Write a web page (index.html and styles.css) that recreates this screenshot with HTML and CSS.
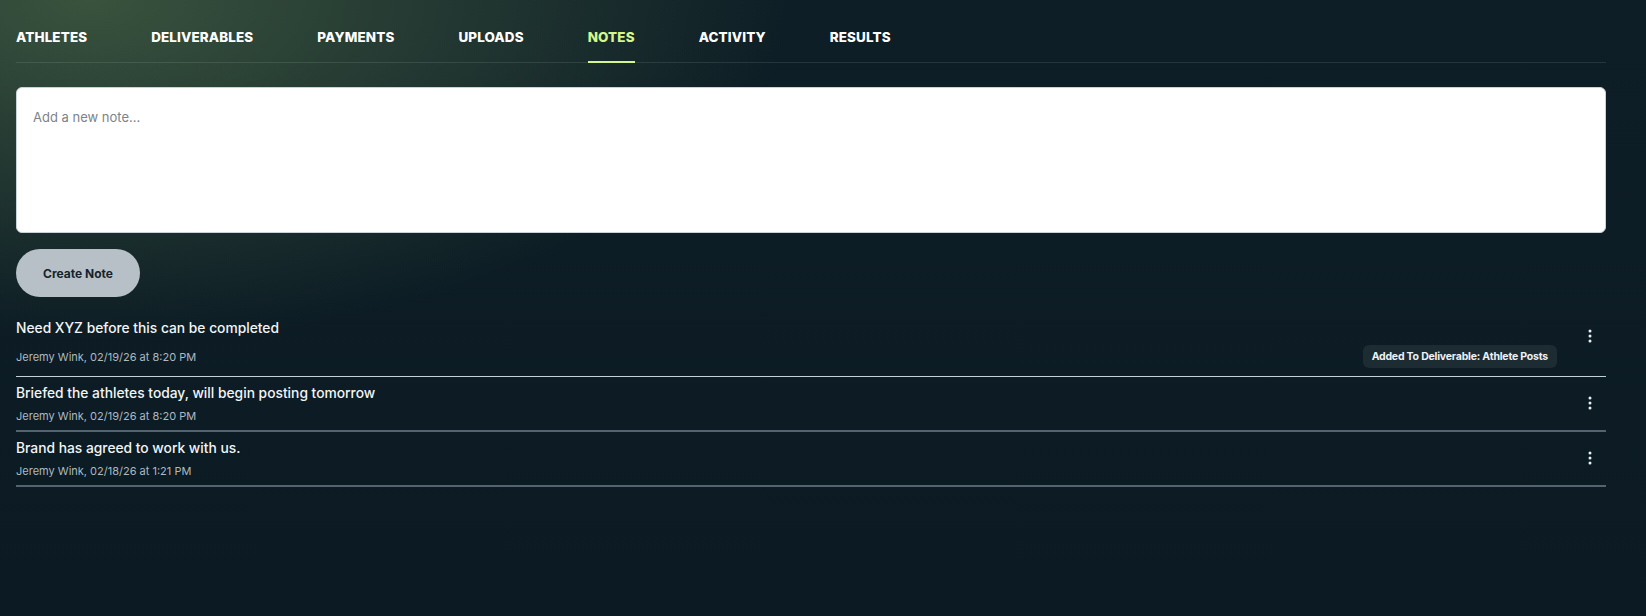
FILE: index.html
```html
<!DOCTYPE html>
<html>
<head>
<meta charset="utf-8">
<link rel="stylesheet" href="styles.css">
</head>
<body>
<div class="page">
  <nav class="tabs">
    <a class="tab">ATHLETES</a>
    <a class="tab">DELIVERABLES</a>
    <a class="tab">PAYMENTS</a>
    <a class="tab">UPLOADS</a>
    <a class="tab active">NOTES</a>
    <a class="tab">ACTIVITY</a>
    <a class="tab">RESULTS</a>
  </nav>
  <textarea class="note-input" placeholder="Add a new note..."></textarea>
  <button class="create-btn">Create Note</button>
  <ul class="notes">
    <li class="note first">
      <div class="note-body">
        <div class="note-title">Need XYZ before this can be completed</div>
        <div class="note-meta spaced">Jeremy Wink, 02/19/26 at 8:20 PM</div>
      </div>
      <span class="badge">Added To Deliverable: Athlete Posts</span>
      <button class="kebab"><svg width="4" height="14" viewBox="0 0 4 14"><circle cx="2" cy="2" r="1.5"/><circle cx="2" cy="7" r="1.5"/><circle cx="2" cy="12" r="1.5"/></svg></button>
    </li>
    <li class="note">
      <div class="note-body">
        <div class="note-title">Briefed the athletes today, will begin posting tomorrow</div>
        <div class="note-meta">Jeremy Wink, 02/19/26 at 8:20 PM</div>
      </div>
      <button class="kebab"><svg width="4" height="14" viewBox="0 0 4 14"><circle cx="2" cy="2" r="1.5"/><circle cx="2" cy="7" r="1.5"/><circle cx="2" cy="12" r="1.5"/></svg></button>
    </li>
    <li class="note">
      <div class="note-body">
        <div class="note-title">Brand has agreed to work with us.</div>
        <div class="note-meta">Jeremy Wink, 02/18/26 at 1:21 PM</div>
      </div>
      <button class="kebab"><svg width="4" height="14" viewBox="0 0 4 14"><circle cx="2" cy="2" r="1.5"/><circle cx="2" cy="7" r="1.5"/><circle cx="2" cy="12" r="1.5"/></svg></button>
    </li>
  </ul>
</div>
</body>
</html>
```

FILE: styles.css
```css
* { box-sizing: border-box; }
html, body { height: 100%; }
body {
  margin: 0;
  font-family: Inter, "Noto Sans", sans-serif;
  color: #fff;
  background:
    radial-gradient(ellipse 700px 340px at 90px 0px, rgba(64, 92, 66, 0.85), rgba(64, 92, 66, 0) 100%),
    linear-gradient(180deg, #0e1e26 0%, #0b1a23 100%);
  background-color: #0b1a23;
  overflow: hidden;
}
.page {
  padding: 0 40px 0 16px;
}
.tabs {
  display: flex;
  gap: 64px;
  height: 63px;
  border-bottom: 1px solid rgba(255, 255, 255, 0.1);
  align-items: stretch;
}
.tab {
  display: flex;
  align-items: center;
  padding-top: 12px;
  font-size: 13.4px;
  font-weight: 800;
  letter-spacing: 0.15px;
  color: #fff;
  border-bottom: 2px solid transparent;
  margin-bottom: -1px;
}
.tab.active {
  color: #d5f78a;
  border-bottom-color: #d5f78a;
}
.note-input {
  display: block;
  width: 100%;
  height: 146px;
  margin-top: 24px;
  border: 1px solid #c9d2d8;
  border-radius: 6px;
  background: #fff;
  padding: 21px 16px;
  font-family: inherit;
  font-size: 13px;
  resize: none;
  outline: none;
}
.note-input::placeholder { color: #7d8388; }
.create-btn {
  display: block;
  margin-top: 16px;
  width: 124px;
  height: 48px;
  border: 0;
  border-radius: 24px;
  background: #b7c0c6;
  color: #16232b;
  font-family: inherit;
  font-size: 12px;
  font-weight: 700;
}
.notes {
  list-style: none;
  margin: 12px 0 0;
  padding: 0;
}
.note {
  position: relative;
  display: flex;
  align-items: flex-start;
  border-bottom: 2px solid #536470;
  padding: 7px 0 7px;
}
.note.first {
  border-bottom: 1px solid #c5d1d8;
  padding: 10px 0 12px;
}
.note-body { flex: 1; }
.note-title {
  font-size: 13.8px;
  font-weight: 500;
  color: #f2f5f7;
  line-height: 18px;
}
.note-meta {
  margin-top: 7px;
  font-size: 11px;
  color: #aeb9c0;
  line-height: 14px;
}
.note-meta.spaced { margin-top: 13px; }
.kebab {
  background: none;
  border: 0;
  padding: 0;
  width: 24px;
  height: 24px;
  margin-right: 4px;
  margin-top: 7px;
  display: flex;
  align-items: center;
  justify-content: center;
  fill: #e8edf0;
}
.note.first .kebab { margin-top: 5px; }
.badge {
  position: absolute;
  right: 49px;
  bottom: 8px;
  background: #1d2b33;
  color: #eef2f4;
  font-size: 10.5px;
  font-weight: 700;
  padding: 5px 9px;
  border-radius: 6px;
  letter-spacing: -0.2px;
}
```
